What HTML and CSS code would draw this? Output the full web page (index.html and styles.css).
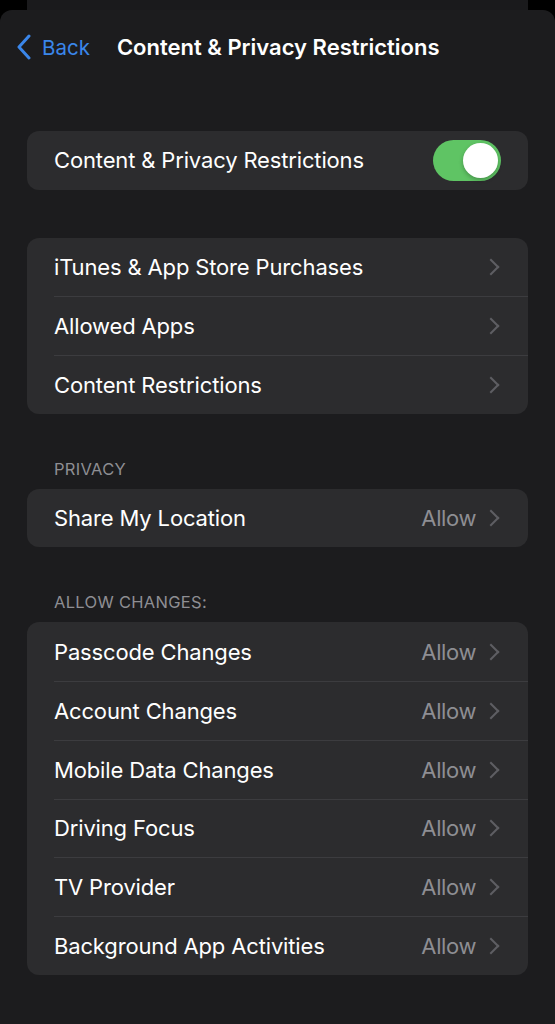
FILE: index.html
```html
<!DOCTYPE html>
<html lang="en">
<head>
  <meta charset="UTF-8" />
  <meta name="viewport" content="width=device-width, initial-scale=1.0" />
  <title>Content &amp; Privacy Restrictions</title>
  <link rel="stylesheet" href="styles.css">
</head>
<body>

  <!-- Sheet behind -->
  <div class="back-sheet"></div>

  <div class="sheet">
    <!-- Nav bar -->
    <div class="nav">
      <div class="back">
        <svg class="back-chevron" width="16" height="26" viewBox="0 0 16 26">
          <path d="M13 2 L3 13 L13 24" fill="none" stroke="#3a86ea" stroke-width="3" stroke-linecap="round" stroke-linejoin="round"/>
        </svg>
        <span>Back</span>
      </div>
      <div class="nav-title">Content &amp; Privacy Restrictions</div>
    </div>

    <div class="group first">
      <div class="row">
        <div class="row-main">
          <span class="label">Content &amp; Privacy Restrictions</span>
          <div class="toggle on"><div class="knob"></div></div>
        </div>
      </div>
    </div>

    <div class="group second">
      <div class="row"><div class="row-main"><span class="label">iTunes &amp; App Store Purchases</span><span class="chev"></span></div></div>
      <div class="row"><div class="row-main"><span class="label">Allowed Apps</span><span class="chev"></span></div></div>
      <div class="row"><div class="row-main"><span class="label">Content Restrictions</span><span class="chev"></span></div></div>
    </div>

    <div class="section-header">PRIVACY</div>
    <div class="group">
      <div class="row"><div class="row-main"><span class="label">Share My Location</span><span class="value">Allow</span><span class="chev"></span></div></div>
    </div>

    <div class="section-header">ALLOW CHANGES:</div>
    <div class="group">
      <div class="row"><div class="row-main"><span class="label">Passcode Changes</span><span class="value">Allow</span><span class="chev"></span></div></div>
      <div class="row"><div class="row-main"><span class="label">Account Changes</span><span class="value">Allow</span><span class="chev"></span></div></div>
      <div class="row"><div class="row-main"><span class="label">Mobile Data Changes</span><span class="value">Allow</span><span class="chev"></span></div></div>
      <div class="row"><div class="row-main"><span class="label">Driving Focus</span><span class="value">Allow</span><span class="chev"></span></div></div>
      <div class="row"><div class="row-main"><span class="label">TV Provider</span><span class="value">Allow</span><span class="chev"></span></div></div>
      <div class="row"><div class="row-main"><span class="label">Background App Activities</span><span class="value">Allow</span><span class="chev"></span></div></div>
    </div>
  </div>

</body>
</html>
```

FILE: styles.css
```css
:root {
  --bg: #1c1c1e;
  --card: #2c2c2e;
  --sep: #3c3c3f;
  --text: #ffffff;
  --secondary: #8e8e93;
  --chevron: #5e5e63;
  --blue: #3a86ea;
  --green: #5fc464;
}

html, body {
  height: 100%;
}

body {
  margin: 0;
  background-color: #000;
  font-family: Inter, "Noto Sans", sans-serif;
  color: var(--text);
  -webkit-font-smoothing: antialiased;
}

.back-sheet {
  height: 10px;
  margin: 0 27px;
  background-color: #1a1a1c;
}

.sheet {
  background-color: var(--bg);
  border-radius: 12px 12px 0 0;
  min-height: calc(100% - 10px);
  padding-bottom: 40px;
  box-sizing: border-box;
}

.nav {
  height: 74px;
  display: flex;
  align-items: center;
  padding-left: 16px;
}

.back {
  display: flex;
  align-items: center;
  color: var(--blue);
  font-size: 20.5px;
}

.back-chevron {
  margin-right: 10px;
  margin-top: -1px;
}

.nav-title {
  margin-left: 27px;
  font-size: 22px;
  font-weight: 600;
}

.group {
  margin: 0 27px;
  background-color: var(--card);
  border-radius: 12px;
  overflow: hidden;
}

.group.first {
  margin-top: 47px;
}

.group.second {
  margin-top: 48px;
}

.section-header {
  padding: 45px 0 10px 54px;
  font-size: 16.5px;
  line-height: 20px;
  color: var(--secondary);
  letter-spacing: 0.3px;
}

.row {
  padding-left: 27px;
}

.row-main {
  height: 58.7px;
  box-sizing: border-box;
  display: flex;
  align-items: center;
  padding-right: 28px;
}

.row + .row .row-main {
  border-top: 1px solid var(--sep);
}

.label {
  flex: 1;
  font-size: 22px;
  letter-spacing: -0.15px;
}

.value {
  font-size: 22px;
  color: var(--secondary);
  letter-spacing: -0.4px;
  margin-right: 9px;
}

.chev {
  width: 10px;
  height: 10px;
  border-top: 2.5px solid var(--chevron);
  border-right: 2.5px solid var(--chevron);
  transform: rotate(45deg);
  margin-right: 3px;
}

.toggle {
  width: 68px;
  height: 41px;
  border-radius: 21px;
  background-color: #3a3a3c;
  position: relative;
  margin-right: -1px;
}

.toggle.on {
  background-color: var(--green);
}

.knob {
  position: absolute;
  top: 3px;
  right: 3px;
  width: 35px;
  height: 35px;
  border-radius: 50%;
  background-color: #fff;
  box-shadow: 0 2px 4px rgba(0, 0, 0, 0.25);
}
```
